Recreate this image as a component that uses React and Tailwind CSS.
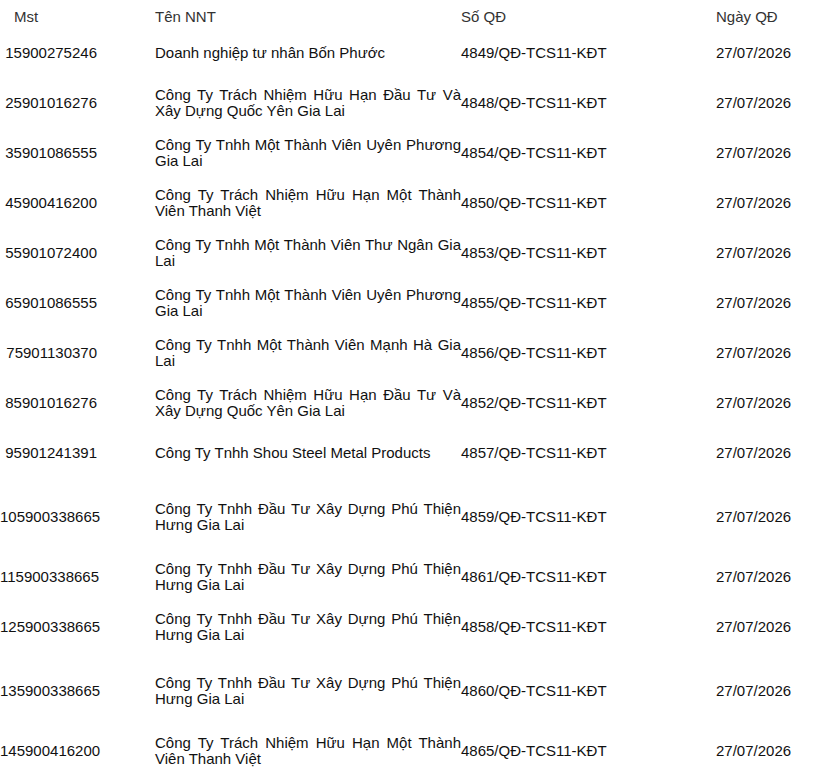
import React from "react";

// Danh sách quyết định theo từng người nộp thuế
const rows = [
  { stt: 1, mst: "5900275246", ten: "Doanh nghiệp tư nhân Bốn Phước", so: "4849/QĐ-TCS11-KĐT", mb: "mb-0" },
  { stt: 2, mst: "5901016276", ten: "Công Ty Trách Nhiệm Hữu Hạn Đầu Tư Và Xây Dựng Quốc Yên Gia Lai", so: "4848/QĐ-TCS11-KĐT", mb: "mb-0" },
  { stt: 3, mst: "5901086555", ten: "Công Ty Tnhh Một Thành Viên Uyên Phương Gia Lai", so: "4854/QĐ-TCS11-KĐT", mb: "mb-0" },
  { stt: 4, mst: "5900416200", ten: "Công Ty Trách Nhiệm Hữu Hạn Một Thành Viên Thanh Việt", so: "4850/QĐ-TCS11-KĐT", mb: "mb-0" },
  { stt: 5, mst: "5901072400", ten: "Công Ty Tnhh Một Thành Viên Thư Ngân Gia Lai", so: "4853/QĐ-TCS11-KĐT", mb: "mb-0" },
  { stt: 6, mst: "5901086555", ten: "Công Ty Tnhh Một Thành Viên Uyên Phương Gia Lai", so: "4855/QĐ-TCS11-KĐT", mb: "mb-0" },
  { stt: 7, mst: "5901130370", ten: "Công Ty Tnhh Một Thành Viên Mạnh Hà Gia Lai", so: "4856/QĐ-TCS11-KĐT", mb: "mb-0" },
  { stt: 8, mst: "5901016276", ten: "Công Ty Trách Nhiệm Hữu Hạn Đầu Tư Và Xây Dựng Quốc Yên Gia Lai", so: "4852/QĐ-TCS11-KĐT", mb: "mb-0" },
  { stt: 9, mst: "5901241391", ten: "Công Ty Tnhh Shou Steel Metal Products", so: "4857/QĐ-TCS11-KĐT", mb: "mb-[14px]" },
  { stt: 10, mst: "5900338665", ten: "Công Ty Tnhh Đầu Tư Xây Dựng Phú Thiện Hưng Gia Lai", so: "4859/QĐ-TCS11-KĐT", mb: "mb-[10px]" },
  { stt: 11, mst: "5900338665", ten: "Công Ty Tnhh Đầu Tư Xây Dựng Phú Thiện Hưng Gia Lai", so: "4861/QĐ-TCS11-KĐT", mb: "mb-0" },
  { stt: 12, mst: "5900338665", ten: "Công Ty Tnhh Đầu Tư Xây Dựng Phú Thiện Hưng Gia Lai", so: "4858/QĐ-TCS11-KĐT", mb: "mb-[14px]" },
  { stt: 13, mst: "5900338665", ten: "Công Ty Tnhh Đầu Tư Xây Dựng Phú Thiện Hưng Gia Lai", so: "4860/QĐ-TCS11-KĐT", mb: "mb-[10px]" },
  { stt: 14, mst: "5900416200", ten: "Công Ty Trách Nhiệm Hữu Hạn Một Thành Viên Thanh Việt", so: "4865/QĐ-TCS11-KĐT", mb: "mb-0" },
];

const cols = "grid grid-cols-[155px_306px_255px_1fr]";

const App = () => {
  return (
    <div
      className="w-[815px] h-[780px] overflow-hidden bg-white text-[#111] text-[15px] leading-[16px]"
      style={{ fontFamily: '"Liberation Sans", Arial, sans-serif' }}
    >
      {/* Tiêu đề bảng */}
      <div className={`${cols} items-start h-[28px] pt-[9px] text-[#333]`}>
        <div className="pl-[14px]">Mst</div>
        <div>Tên NNT</div>
        <div>Số QĐ</div>
        <div>Ngày QĐ</div>
      </div>

      {/* Các dòng dữ liệu */}
      {rows.map((r) => (
        <div key={r.stt} className={`${cols} items-center h-[50px] ${r.mb}`}>
          <div className="w-[97px] text-right whitespace-nowrap">
            {r.stt}
            {r.mst}
          </div>
          <div className="text-justify">{r.ten}</div>
          <div className="whitespace-nowrap">{r.so}</div>
          <div>27/07/2026</div>
        </div>
      ))}
    </div>
  );
};

export default App;
